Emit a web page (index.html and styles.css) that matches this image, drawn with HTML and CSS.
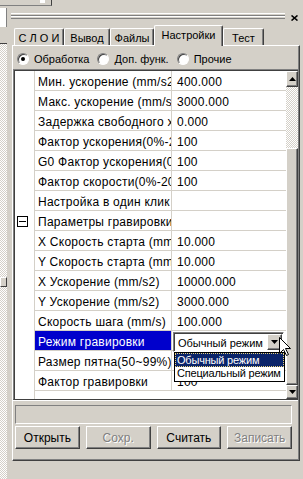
FILE: index.html
```html
<!DOCTYPE html>
<html lang="ru">
<head>
    <meta charset="UTF-8">
    <title>Настройки</title>
    <link rel="stylesheet" href="styles.css">
</head>
<body>
    <div class="topbar">
        <div class="topbar-left"><span class="topbar-box"></span></div>
    </div>
    <div class="main">
        <div class="strip">
            <div class="strip-field"></div>
            <div class="strip-button"></div>
            <div class="strip-dither"><div class="strip-knob"></div></div>
        </div>

        <div class="dock">
            <div class="dock-title">
                <div class="grip">
                    <div class="grip-bar"></div>
                    <div class="grip-bar"></div>
                </div>
                <svg class="close" width="7" height="6" viewBox="0 0 7 6">
                    <path d="M0.5 0.5 L6.5 5.5 M6.5 0.5 L0.5 5.5" stroke="#000" stroke-width="1.6"/>
                </svg>
            </div>

            <div class="tabs">
                <div class="tab t1">С Л О И</div>
                <div class="tab t2">Вывод</div>
                <div class="tab t3">Файлы</div>
                <div class="tab t4 active">Настройки</div>
                <div class="tab t5">Тест</div>
            </div>

            <div class="page">
                <div class="page-in">
                    <div class="modes">
                        <label class="mode"><span class="radio on"></span>Обработка</label>
                        <label class="mode"><span class="radio"></span>Доп. функ.</label>
                        <label class="mode"><span class="radio"></span>Прочие</label>
                    </div>

                    <div class="grid">
                        <div class="grid-in">
                            <div class="pg-body">
                                <div class="row"><div class="gutter"></div><div class="label">Мин. ускорение (mm/s2)</div><div class="value">400.000</div></div>
                                <div class="row"><div class="gutter"></div><div class="label">Макс. ускорение (mm/s2)</div><div class="value">3000.000</div></div>
                                <div class="row"><div class="gutter"></div><div class="label">Задержка свободного хода</div><div class="value">0.000</div></div>
                                <div class="row"><div class="gutter"></div><div class="label">Фактор ускорения(0%-200%)</div><div class="value">100</div></div>
                                <div class="row"><div class="gutter"></div><div class="label">G0 Фактор ускорения(0%-200%)</div><div class="value">100</div></div>
                                <div class="row"><div class="gutter"></div><div class="label">Фактор скорости(0%-200%)</div><div class="value">100</div></div>
                                <div class="row"><div class="gutter"></div><div class="label">Настройка в один клик</div><div class="value"></div></div>
                                <div class="row"><div class="gutter"><span class="collapse"></span></div><div class="label">Параметры гравировки</div><div class="value"></div></div>
                                <div class="row"><div class="gutter"></div><div class="label">X Скорость старта (mm/s)</div><div class="value">10.000</div></div>
                                <div class="row"><div class="gutter"></div><div class="label">Y Скорость старта (mm/s)</div><div class="value">10.000</div></div>
                                <div class="row"><div class="gutter"></div><div class="label">X Ускорение (mm/s2)</div><div class="value">10000.000</div></div>
                                <div class="row"><div class="gutter"></div><div class="label">Y Ускорение (mm/s2)</div><div class="value">3000.000</div></div>
                                <div class="row"><div class="gutter"></div><div class="label">Скорость шага (mm/s)</div><div class="value">100.000</div></div>
                                <div class="row">
                                    <div class="gutter"></div>
                                    <div class="label selected">Режим гравировки</div>
                                    <div class="value editing">
                                        <div class="combo">
                                            <span class="combo-text">Обычный режим</span>
                                            <span class="combo-btn">
                                                <svg width="7" height="4" viewBox="0 0 7 4"><polygon points="0,0 7,0 3.5,4" fill="#000"/></svg>
                                            </span>
                                        </div>
                                        <div class="list">
                                            <div class="list-item active">Обычный режим</div>
                                            <div class="list-item">Специальный режим</div>
                                        </div>
                                        <svg class="cursor" width="13" height="20" viewBox="0 0 13 20">
                                            <path d="M0.5 0.5 L0.5 16.5 L4.5 12.5 L7.5 18.5 L9.5 17.5 L6.5 11.5 L11.5 11.5 Z" fill="#fff" stroke="#000" stroke-width="1"/>
                                        </svg>
                                    </div>
                                </div>
                                <div class="row"><div class="gutter"></div><div class="label">Размер пятна(50~99%)</div><div class="value"></div></div>
                                <div class="row"><div class="gutter"></div><div class="label">Фактор гравировки</div><div class="value">100</div></div>
                                <div class="row filler"><div class="gutter"></div></div>
                            </div>

                            <div class="vscroll">
                                <div class="sb-btn up">
                                    <svg width="7" height="4" viewBox="0 0 7 4"><polygon points="0,4 7,4 3.5,0" fill="#000"/></svg>
                                </div>
                                <div class="sb-track"></div>
                                <div class="sb-thumb"></div>
                                <div class="sb-btn down">
                                    <svg width="7" height="4" viewBox="0 0 7 4"><polygon points="0,0 7,0 3.5,4" fill="#000"/></svg>
                                </div>
                            </div>
                        </div>
                    </div>

                    <div class="desc"></div>

                    <div class="buttons">
                        <button class="btn">Открыть</button>
                        <button class="btn" disabled>Сохр.</button>
                        <button class="btn">Считать</button>
                        <button class="btn" disabled>Записать</button>
                    </div>
                </div>
            </div>
        </div>
    </div>
</body>
</html>
```

FILE: styles.css
```css
body {
    margin: 0;
    width: 303px;
    height: 479px;
    overflow: hidden;
    background: #d4d0c8;
    font-family: "Liberation Sans", Arial, sans-serif;
    font-size: 12px;
    color: #000;
}

/* window behind the dock */
.topbar {
    height: 8px;
}

.topbar-left {
    width: 52px;
    height: 6px;
    padding-left: 40px;
    box-sizing: border-box;
    border-right: 1px solid #404040;
    border-bottom: 1px solid #808080;
}

.topbar-box {
    display: block;
    width: 5px;
    height: 3px;
    background: #fff;
}

.main {
    display: flex;
    height: 471px;
}

.strip {
    width: 7px;
    flex: none;
    display: flex;
    flex-direction: column;
}

.strip-field {
    height: 19px;
    background: #fff;
    border-right: 1px solid #808080;
}

.strip-button {
    height: 17px;
    box-sizing: border-box;
    border-bottom: 1px solid #404040;
}

.strip-dither {
    flex: 1;
    background: repeating-conic-gradient(#fff 0 25%, #d4d0c8 0 50%) 0 0 / 2px 2px;
}

.strip-knob {
    margin-top: 233px;
    height: 10px;
    box-sizing: border-box;
    background: #d4d0c8;
    border: 1px solid;
    border-color: #fff #404040 #404040 #fff;
}

/* dock */
.dock {
    flex: 1;
    padding-left: 5px;
    display: flex;
    flex-direction: column;
}

.dock-title {
    height: 17px;
    box-sizing: border-box;
    padding-top: 5px;
    display: flex;
    align-items: flex-start;
}

.grip {
    width: 274px;
    margin-left: -1px;
}

.grip-bar {
    height: 1px;
    border-top: 1px solid #fff;
    border-bottom: 1px solid #808080;
}

.close {
    display: block;
    margin: 2px 0 0 6px;
}

/* tabs */
.tabs {
    height: 20px;
    display: flex;
    align-items: flex-end;
    padding-left: 2px;
    font-size: 11px;
    position: relative;
    z-index: 1;
}

.tab {
    height: 17px;
    box-sizing: border-box;
    border: 1px solid;
    border-color: #fff #404040 transparent #fff;
    border-bottom: none;
    border-radius: 2px 2px 0 0;
    box-shadow: inset -1px 0 #808080;
    padding-top: 3px;
    line-height: 13px;
    text-align: center;
    white-space: nowrap;
}

.tab.active {
    height: 21px;
    margin-bottom: -1px;
    background: #d4d0c8;
}

.t1 { width: 50px; }
.t2 { width: 46px; }
.t3 { width: 44px; }
.t4 { width: 69px; }
.t5 { width: 41px; }

/* tab page */
.page {
    width: 288px;
    box-sizing: border-box;
    border-top: 1px solid #fff;
    border-left: 1px solid #fff;
    border-right: 1px solid #404040;
    border-bottom: 1px solid #404040;
}

.page-in {
    border-right: 1px solid #808080;
    border-bottom: 1px solid #808080;
    padding-bottom: 10px;
}

.modes {
    height: 23px;
    box-sizing: border-box;
    padding: 3px 0 0 4px;
    display: flex;
    align-items: center;
    font-size: 11px;
}

.mode {
    display: flex;
    align-items: center;
    gap: 5px;
    margin-right: 8px;
}

.radio {
    position: relative;
    width: 12px;
    height: 12px;
    box-sizing: border-box;
    border-radius: 50%;
    background: #fff;
    border: 1px solid;
    border-color: #808080 #fff #fff #808080;
    box-shadow: inset 1px 1px #404040;
}

.radio.on::after {
    content: "";
    position: absolute;
    left: 3px;
    top: 3px;
    width: 4px;
    height: 4px;
    border-radius: 50%;
    background: #000;
}

/* property grid */
.grid {
    border-top: 1px solid #808080;
    border-left: 1px solid #808080;
    border-bottom: 1px solid #404040;
    box-shadow: 0 1px #fff;
}

.grid-in {
    display: flex;
    height: 328px;
    border-top: 1px solid #404040;
    border-left: 1px solid #404040;
}

.pg-body {
    flex: 1;
    display: flex;
    flex-direction: column;
    background: #fff;
}

.row {
    display: flex;
    height: 20px;
    flex: none;
}

.row.filler {
    flex: 1;
}

.gutter {
    width: 20px;
    flex: none;
    box-sizing: border-box;
    border-right: 1px solid #d4d0c8;
    padding: 5px 0 0 2px;
}

.collapse {
    display: flex;
    align-items: center;
    justify-content: center;
    width: 11px;
    height: 11px;
    box-sizing: border-box;
    border: 1px solid #000;
    background: #fff;
}

.collapse::before {
    content: "";
    width: 7px;
    height: 1px;
    background: #000;
}

.label, .value {
    box-sizing: border-box;
    height: 20px;
    border-bottom: 1px solid #d4d0c8;
    padding-top: 4px;
    line-height: 15px;
    letter-spacing: 0.25px;
    white-space: nowrap;
    overflow: hidden;
}

.label {
    width: 137px;
    flex: none;
    border-right: 1px solid #d4d0c8;
    padding-left: 3px;
}

.label.selected {
    background: #0000cc;
    color: #fff;
}

.value {
    flex: 1;
    padding-left: 5px;
}

.value.editing {
    position: relative;
    overflow: visible;
}

.combo {
    position: absolute;
    left: 1px;
    top: 1px;
    width: 111px;
    height: 20px;
    box-sizing: border-box;
    display: flex;
    align-items: center;
    background: #fff;
    border: 1px solid;
    border-color: #808080 #fff #fff #808080;
    box-shadow: inset 1px 1px #404040;
    font-size: 11px;
    letter-spacing: 0;
    z-index: 1;
}

.combo-text {
    flex: 1;
    padding: 1px 0 0 4px;
    line-height: 14px;
}

.combo-btn {
    width: 15px;
    height: 16px;
    margin-right: 1px;
    box-sizing: border-box;
    display: flex;
    align-items: center;
    justify-content: center;
    background: #d4d0c8;
    border: 1px solid;
    border-color: #fff #404040 #404040 #fff;
    box-shadow: inset -1px -1px #808080;
}

.list {
    position: absolute;
    left: 2px;
    top: 21px;
    width: 111px;
    box-sizing: border-box;
    border: 1px solid #000;
    background: #fff;
    font-size: 11px;
    letter-spacing: -0.2px;
    z-index: 2;
}

.list-item {
    height: 14px;
    box-sizing: border-box;
    padding-left: 2px;
    line-height: 13px;
    white-space: nowrap;
    overflow: hidden;
}

.list-item.active {
    background: #0a246a;
    color: #fff;
    border: 1px dotted #e6d27a;
    padding-left: 1px;
    line-height: 12px;
}

.cursor {
    position: absolute;
    left: 107px;
    top: 6px;
    z-index: 3;
}

/* scrollbar */
.vscroll {
    width: 12px;
    flex: none;
    display: flex;
    flex-direction: column;
}

.sb-btn, .sb-thumb {
    box-sizing: border-box;
    background: #d4d0c8;
    border: 1px solid;
    border-color: #fff #404040 #404040 #fff;
    box-shadow: inset -1px -1px #808080;
}

.sb-btn {
    display: flex;
    align-items: center;
    justify-content: center;
}

.sb-btn.up { height: 16px; }
.sb-btn.down { height: 14px; }

.sb-track {
    height: 61px;
    background: repeating-conic-gradient(#fff 0 25%, #d4d0c8 0 50%) 0 0 / 2px 2px;
}

.sb-thumb {
    height: 237px;
}

/* bottom */
.desc {
    height: 19px;
    margin: 5px 6px 0 2px;
    box-sizing: border-box;
    border: 1px solid;
    border-color: #808080 #fff #fff #808080;
}

.buttons {
    display: grid;
    grid-template-columns: repeat(4, 1fr);
    gap: 6px;
    margin: 2px 6px 0 2px;
}

.btn {
    height: 23px;
    padding: 0;
    font-family: "Liberation Sans", Arial, sans-serif;
    font-size: 12px;
    color: #000;
    background: #d4d0c8;
    border: 1px solid;
    border-color: #fff #404040 #404040 #fff;
    box-shadow: inset -1px -1px #808080;
}

.btn:disabled {
    color: #808080;
    text-shadow: 1px 1px 0 #fff;
}
```
